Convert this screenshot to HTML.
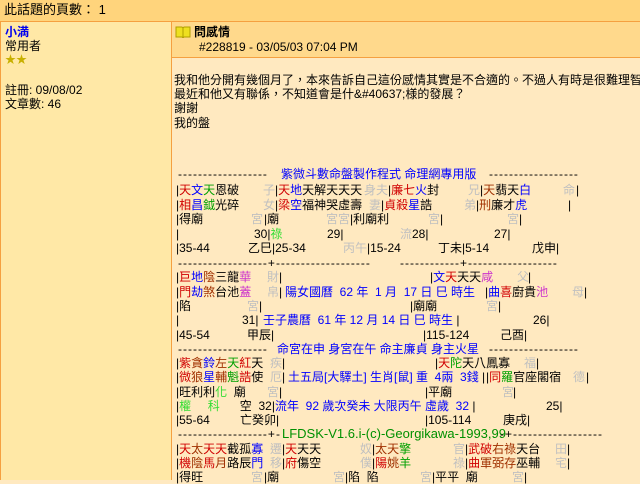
<!DOCTYPE html>
<html><head><meta charset="utf-8"><style>
*{margin:0;padding:0}
body{width:640px;height:480px;overflow:hidden;position:relative;background:#FFE9C0;font-family:"Liberation Sans","Noto Sans CJK TC",sans-serif;font-size:12px;color:#000}
.a{position:absolute;white-space:pre;line-height:14px}
.d{letter-spacing:1px}
.top{position:absolute;left:0;top:0;width:640px;height:21px;background:#FFD47C;border-bottom:1px solid #F5A040}
.left{position:absolute;left:0;top:22px;width:170px;height:458px;background:#FFE8A6;border-left:1px solid #F5A040;border-right:1px solid #F5A040}
.hdr{position:absolute;left:172px;top:22px;width:468px;height:35px;background:#FFD98C;border-bottom:1px solid #F5A040}
.r{color:#D00000}.b{color:#0000FF}.g{color:#00A000}.lg{color:#33DD33}.br{color:#A03000}.m{color:#CC33CC}.gy{color:#C0C0C0}.dg{color:#009000}
</style></head><body>
<div class="top"></div><div class="left"></div><div class="hdr"></div>
<div class="a" style="left:4px;top:3px;font-size:13px">此話題的頁數： 1</div>
<div class="a" style="left:5px;top:25px;color:#0000EE;font-weight:bold">小満</div>
<div class="a" style="left:5px;top:39px">常用者</div>
<div class="a" style="left:5px;top:53px;color:#C8B000;font-size:11px">★★</div>
<div class="a" style="left:5px;top:83px">註冊: 09/08/02</div>
<div class="a" style="left:5px;top:97px">文章數: 46</div>
<svg style="position:absolute;left:175px;top:26px" width="16" height="12"><path d="M1 1h6l1 1 1-1h6v10H9l-1 1-1-1H1z" fill="#EEE020" stroke="#B0A000"/><path d="M8 2v9" stroke="#B0A000"/></svg>
<div class="a" style="left:194px;top:25px;font-weight:bold">問感情</div>
<div class="a" style="left:199px;top:40px;font-size:12px">#228819 - 03/05/03 07:04 PM</div>
<div class="a" style="left:174px;top:73px">我和他分開有幾個月了，本來告訴自己這份感情其實是不合適的。不過人有時是很難理智</div>
<div class="a" style="left:174px;top:87px">最近和他又有聯係，不知道會是什&amp;#40637;様的發展？</div>
<div class="a" style="left:174px;top:101px">謝謝</div>
<div class="a" style="left:174px;top:116px">我的盤</div>

<div class="a d" style="left:178px;top:167px">------------------</div><div class="a b" style="left:281px;top:167px">紫微斗數命盤製作程式 命理網專用版</div><div class="a d" style="left:489px;top:167px">------------------</div>

<div class="a" style="left:176px;top:183px">|<span class="r">天</span><span class="b">文</span><span class="g">天</span>恩破</div><div class="a gy" style="left:263px;top:183px">子</div><div class="a" style="left:275px;top:183px">|<span class="r">天</span><span class="b">地</span>天解天天天</div><div class="a gy" style="left:364px;top:183px">身夫</div><div class="a" style="left:388px;top:183px">|<span class="r">廉七</span><span class="b">火</span>封</div><div class="a gy" style="left:468px;top:183px">兄</div><div class="a" style="left:480px;top:183px">|<span class="br">天</span>翡天<span class="b">白</span></div><div class="a gy" style="left:563px;top:183px">命</div><div class="a" style="left:576px;top:183px">|</div>

<div class="a" style="left:176px;top:198px">|<span class="r">相</span><span class="b">昌</span><span class="g">鉞</span>光碎</div><div class="a gy" style="left:263px;top:198px">女</div><div class="a" style="left:275px;top:198px">|<span class="r">梁</span><span class="b">空</span>福神哭虛壽</div><div class="a gy" style="left:369px;top:198px">妻</div><div class="a" style="left:381px;top:198px">|<span class="r">貞殺</span><span class="b">星</span>誥</div><div class="a gy" style="left:464px;top:198px">弟</div><div class="a" style="left:476px;top:198px">|<span class="br">刑</span>廉才<span class="b">虎</span></div><div class="a" style="left:568px;top:198px">|</div>

<div class="a" style="left:176px;top:212px">|得廟</div><div class="a gy" style="left:251px;top:212px">宮</div><div class="a" style="left:264px;top:212px">|廟</div><div class="a gy" style="left:326px;top:212px">宮宮</div><div class="a" style="left:350px;top:212px">|利廟利</div><div class="a gy" style="left:428px;top:212px">宮</div><div class="a" style="left:440px;top:212px">|</div><div class="a gy" style="left:507px;top:212px">宮</div><div class="a" style="left:519px;top:212px">|</div>

<div class="a" style="left:176px;top:227px">|</div><div class="a" style="left:254px;top:227px">30|<span class="lg">祿</span></div><div class="a" style="left:327px;top:227px">29|</div><div class="a gy" style="left:400px;top:227px">流</div><div class="a" style="left:412px;top:227px">28|</div><div class="a" style="left:494px;top:227px">27|</div>

<div class="a" style="left:176px;top:241px">|35-44</div><div class="a" style="left:248px;top:241px">乙巳|25-34</div><div class="a gy" style="left:343px;top:241px">丙午</div><div class="a" style="left:367px;top:241px">|15-24</div><div class="a" style="left:438px;top:241px">丁未|5-14</div><div class="a" style="left:532px;top:241px">戊申|</div>

<div class="a d" style="left:178px;top:256px">------------------+-------------------</div><div class="a d" style="left:400px;top:256px">------------+------------------</div>

<div class="a" style="left:176px;top:270px">|<span class="r">巨</span><span class="b">地</span><span class="br">陰</span>三龍<span class="m">華</span></div><div class="a gy" style="left:267px;top:270px">財</div><div class="a" style="left:279px;top:270px">|</div><div class="a" style="left:430px;top:270px">|<span class="b">文</span><span class="r">天</span>天天<span class="m">咸</span></div><div class="a gy" style="left:517px;top:270px">父</div><div class="a" style="left:528px;top:270px">|</div>

<div class="a" style="left:176px;top:285px">|<span class="r">門</span><span class="b">劫</span><span class="br">煞</span>台池<span class="m">蓋</span></div><div class="a gy" style="left:267px;top:285px">帛</div><div class="a" style="left:279px;top:285px">|</div><div class="a b" style="left:285px;top:285px">陽女國曆  62 年  1 月  17 日 巳 時生</div><div class="a" style="left:485px;top:285px">|<span class="b">曲</span><span class="r">喜</span>廚貴<span class="m">池</span></div><div class="a gy" style="left:572px;top:285px">母</div><div class="a" style="left:584px;top:285px">|</div>

<div class="a" style="left:176px;top:299px">|陷</div><div class="a gy" style="left:247px;top:299px">宮</div><div class="a" style="left:259px;top:299px">|</div><div class="a" style="left:410px;top:299px">|廟廟</div><div class="a gy" style="left:486px;top:299px">宮</div><div class="a" style="left:498px;top:299px">|</div>

<div class="a" style="left:176px;top:313px">|</div><div class="a" style="left:242px;top:313px">31|</div><div class="a b" style="left:263px;top:313px">壬子農曆  61 年 12 月 14 日 巳 時生 <span style="color:#000">|</span></div><div class="a" style="left:533px;top:313px">26|</div>

<div class="a" style="left:176px;top:328px">|45-54</div><div class="a" style="left:247px;top:328px">甲辰|</div><div class="a" style="left:423px;top:328px">|115-124</div><div class="a" style="left:500px;top:328px">己酉|</div>

<div class="a d" style="left:178px;top:342px">------------------</div><div class="a b" style="left:277px;top:342px">命宮在申 身宮在午 命主廉貞 身主火星</div><div class="a d" style="left:489px;top:342px">------------------</div>

<div class="a" style="left:176px;top:356px">|<span class="r">紫</span><span class="br">貪</span><span class="b">鈴</span><span class="br">左</span><span class="g">天</span><span class="r">紅</span>天</div><div class="a gy" style="left:270px;top:356px">疾</div><div class="a" style="left:282px;top:356px">|</div><div class="a" style="left:435px;top:356px">|<span class="r">天</span><span class="g">陀</span>天八鳳寡</div><div class="a gy" style="left:524px;top:356px">福</div><div class="a" style="left:536px;top:356px">|</div>

<div class="a" style="left:176px;top:370px">|<span class="r">微</span><span class="br">狼</span><span class="b">星</span><span class="br">輔</span><span class="g">魁</span><span class="r">誥</span>使</div><div class="a gy" style="left:270px;top:370px">厄</div><div class="a" style="left:282px;top:370px">|</div><div class="a b" style="left:288px;top:370px">土五局[大驛土] 生肖[鼠] 重  4兩  3錢 <span style="color:#000">|</span></div><div class="a" style="left:486px;top:370px">|<span class="r">同</span><span class="g">羅</span>官座閣宿</div><div class="a gy" style="left:573px;top:370px">德</div><div class="a" style="left:586px;top:370px">|</div>

<div class="a" style="left:176px;top:385px">|旺利利<span class="lg">化</span>  廟</div><div class="a gy" style="left:267px;top:385px">宮</div><div class="a" style="left:279px;top:385px">|</div><div class="a" style="left:425px;top:385px">|平廟</div><div class="a gy" style="left:502px;top:385px">宮</div><div class="a" style="left:513px;top:385px">|</div>

<div class="a" style="left:176px;top:399px">|<span class="lg">權     科</span>      空  32|</div><div class="a b" style="left:275px;top:399px">流年  92 歲次癸未 大限丙午 虛歲  32 <span style="color:#000">|</span></div><div class="a" style="left:546px;top:399px">25|</div>

<div class="a" style="left:176px;top:413px">|55-64</div><div class="a" style="left:240px;top:413px">亡癸卯|</div><div class="a" style="left:425px;top:413px">|105-114</div><div class="a" style="left:503px;top:413px">庚戌|</div>

<div class="a d" style="left:178px;top:427px">------------------+-</div><div class="a dg" style="left:282px;top:427px;font-size:13px">LFDSK-V1.6.i-(c)-Georgikawa-1993,99</div><div class="a d" style="left:500px;top:427px">-+------------------</div>

<div class="a" style="left:176px;top:442px">|<span class="r">天</span><span class="br">太</span><span class="r">天天</span>截孤<span class="b">寡</span></div><div class="a gy" style="left:270px;top:442px">遷</div><div class="a" style="left:282px;top:442px">|<span class="r">天</span>天天</div><div class="a gy" style="left:360px;top:442px">奴</div><div class="a" style="left:372px;top:442px">|<span class="br">太天</span><span class="g">擎</span></div><div class="a gy" style="left:453px;top:442px">官</div><div class="a" style="left:465px;top:442px">|<span class="r">武破</span><span class="br">右祿</span>天台</div><div class="a gy" style="left:555px;top:442px">田</div><div class="a" style="left:567px;top:442px">|</div>

<div class="a" style="left:176px;top:456px">|<span class="r">機</span><span class="br">陰</span><span class="r">馬</span><span class="br">月</span>路辰<span class="b">門</span></div><div class="a gy" style="left:270px;top:456px">移</div><div class="a" style="left:282px;top:456px">|<span class="r">府</span>傷空</div><div class="a gy" style="left:360px;top:456px">僕</div><div class="a" style="left:372px;top:456px">|<span class="r">陽</span><span class="br">姚</span><span class="g">羊</span></div><div class="a gy" style="left:453px;top:456px">祿</div><div class="a" style="left:465px;top:456px">|<span class="r">曲</span><span class="br">軍弼存</span>巫輔</div><div class="a gy" style="left:555px;top:456px">宅</div><div class="a" style="left:567px;top:456px">|</div>

<div class="a" style="left:176px;top:470px">|得旺</div><div class="a gy" style="left:251px;top:470px">宮</div><div class="a" style="left:264px;top:470px">|廟</div><div class="a gy" style="left:333px;top:470px">宮</div><div class="a" style="left:345px;top:470px">|陷  陷</div><div class="a gy" style="left:420px;top:470px">宮</div><div class="a" style="left:432px;top:470px">|平平  廟</div><div class="a gy" style="left:512px;top:470px">宮</div><div class="a" style="left:524px;top:470px">|</div>
</body></html>
